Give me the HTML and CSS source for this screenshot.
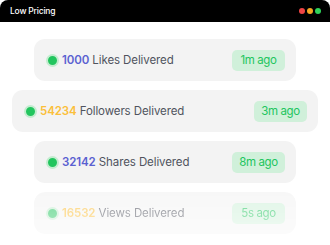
FILE: index.html
```html
<!DOCTYPE html>
<html lang="en">
<head>
    <meta charset="UTF-8">
    <meta name="viewport" content="width=device-width, initial-scale=1.0">
    <title>Low Pricing</title>
    <link rel="stylesheet" href="styles.css">
</head>
<body>
    <div class="window">
        <div class="titlebar">
            <span class="title">Low Pricing</span>
            <div class="lights">
                <span class="light red"></span>
                <span class="light amber"></span>
                <span class="light green"></span>
            </div>
        </div>

        <div class="feed">
            <div class="item">
                <span class="status"></span>
                <p class="label"><b class="num blue">1000</b> Likes Delivered</p>
                <span class="time">1m ago</span>
            </div>
            <div class="item wide">
                <span class="status"></span>
                <p class="label"><b class="num yellow">54234</b> Followers Delivered</p>
                <span class="time">3m ago</span>
            </div>
            <div class="item">
                <span class="status"></span>
                <p class="label"><b class="num blue">32142</b> Shares Delivered</p>
                <span class="time">8m ago</span>
            </div>
            <div class="item faded">
                <span class="status"></span>
                <p class="label"><b class="num yellow">16532</b> Views Delivered</p>
                <span class="time">5s ago</span>
            </div>
        </div>
    </div>
</body>
</html>
```
FILE: styles.css
```css
body { margin: 0; background: #fff; font-family: Inter, "Noto Sans", sans-serif; }
.window { width: 330px; height: 245px; overflow: hidden; }

.titlebar { height: 22px; background: #000; border-radius: 8px 8px 0 0; display: flex; align-items: center; justify-content: space-between; padding: 0 9px 0 10px; }
.title { color: #fff; font-size: 8.5px; font-weight: 500; letter-spacing: -0.2px; }
.lights { display: flex; gap: 2px; }
.light { width: 6px; height: 6px; border-radius: 50%; }
.red { background: #ef4444; }
.amber { background: #f5a623; }
.green { background: #2fd35a; }

.feed { display: flex; flex-direction: column; align-items: center; gap: 9px; padding-top: 17px; }
.item { width: 262px; height: 42px; box-sizing: border-box; background: #f3f3f3; border-radius: 11px; display: flex; align-items: center; padding: 0 11px 0 12px; }
.item.wide { width: 306px; }
.item.faded { -webkit-mask-image: linear-gradient(to bottom, rgba(0,0,0,.65), rgba(0,0,0,.35)); mask-image: linear-gradient(to bottom, rgba(0,0,0,.65), rgba(0,0,0,.35)); }

.status { width: 9px; height: 9px; border-radius: 50%; background: #22c55e; border: 2.5px solid #c3eccf; flex: none; }
.label { margin: 0 0 0 3px; flex: 1; font-size: 11.5px; color: #50535e; letter-spacing: -0.1px; }
.num { font-weight: 600; }
.blue { color: #5a61d1; }
.yellow { color: #fbbf3a; }

.time { background: #d0f0da; color: #22c55e; font-size: 11.5px; letter-spacing: -0.4px; border-radius: 5px; width: 53px; height: 21px; display: flex; align-items: center; justify-content: center; }
```
